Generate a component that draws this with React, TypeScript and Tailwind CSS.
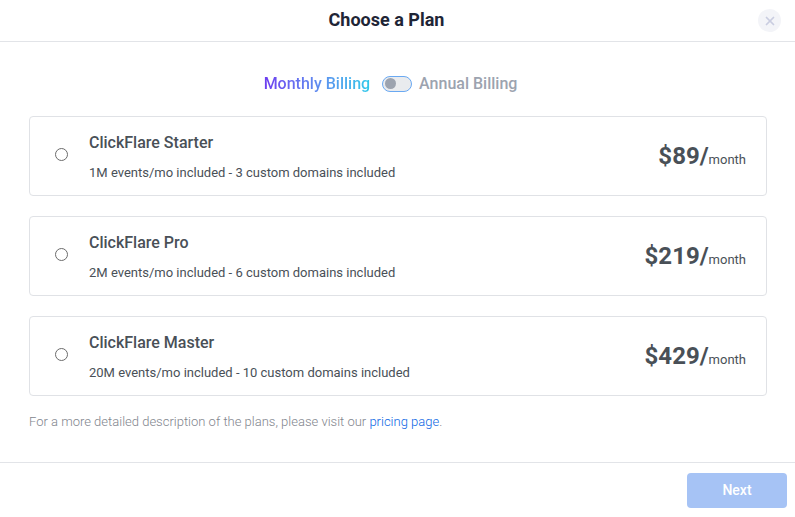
import { X } from "lucide-react";

const plans = [
  { name: "ClickFlare Starter", desc: "1M events/mo included - 3 custom domains included", price: "$89/" },
  { name: "ClickFlare Pro", desc: "2M events/mo included - 6 custom domains included", price: "$219/" },
  { name: "ClickFlare Master", desc: "20M events/mo included - 10 custom domains included", price: "$429/" },
];

export default function App() {
  return (
    <div className="w-[795px] h-[517px] bg-white overflow-hidden flex flex-col font-['Roboto',sans-serif]">
      {/* Header */}
      <div className="h-[42px] shrink-0 border-b border-[#e2e4e8] pr-[22px] flex items-center justify-center relative">
        <h1 className="text-[18px] font-bold text-[#1e2536] -mt-[2px]">Choose a Plan</h1>
        <button className="absolute right-[14px] top-[9px] w-[23px] h-[23px] rounded-full bg-[#f3f4f8] flex items-center justify-center text-[#c9cde0]">
          <X size={14} strokeWidth={3} />
        </button>
      </div>

      {/* Body */}
      <div className="flex-1 pl-[29px] pr-[28px]">
        <div className="h-[74px] pt-[9px] pr-[15px] flex items-center justify-center text-[16px] font-medium">
          <span className="bg-gradient-to-r from-[#6d3bf0] to-[#2cc8ea] bg-clip-text text-transparent">Monthly Billing</span>
          <div className="ml-[12px] w-[30px] h-[16px] rounded-full bg-[#e9ebee] border border-[#6aa9f2] flex items-center pl-[2px]">
            <div className="w-[11px] h-[11px] rounded-full bg-[#9ca3af]" />
          </div>
          <span className="text-[#9ca3af] ml-[7px]">Annual Billing</span>
        </div>

        <div className="flex flex-col gap-[20px]">
          {plans.map((p) => (
            <div key={p.name} className="h-[80px] border border-[#e0e2e6] rounded-[4px] flex items-center pl-[25px] pr-[20px]">
              <div className="w-[13px] h-[13px] rounded-full border border-[#6b6b6b] bg-white shrink-0 -mt-[3px]" />
              <div className="ml-[21px] flex-1 pt-[2px]">
                <div className="text-[16px] font-medium text-[#495057] leading-[19px]">{p.name}</div>
                <div className="text-[13px] text-[#495057] mt-[13px] leading-[16px]">{p.desc}</div>
              </div>
              <div className="flex items-baseline text-[#495057]">
                <span className="text-[24px] font-bold">{p.price}</span>
                <span className="text-[13px]">month</span>
              </div>
            </div>
          ))}
        </div>

        <p className="text-[13px] font-light text-[#7f858d] mt-[18px] leading-[15px]">
          For a more detailed description of the plans, please visit our <span className="text-[#0a66e4]">pricing page</span>.
        </p>
      </div>

      {/* Footer */}
      <div className="h-[55px] shrink-0 border-t border-[#e2e4e8] flex items-center justify-end pr-[8px]">
        <button className="w-[100px] h-[35px] rounded-[4px] bg-[#a6c3f5] text-white text-[14px] font-medium">Next</button>
      </div>
    </div>
  );
}
